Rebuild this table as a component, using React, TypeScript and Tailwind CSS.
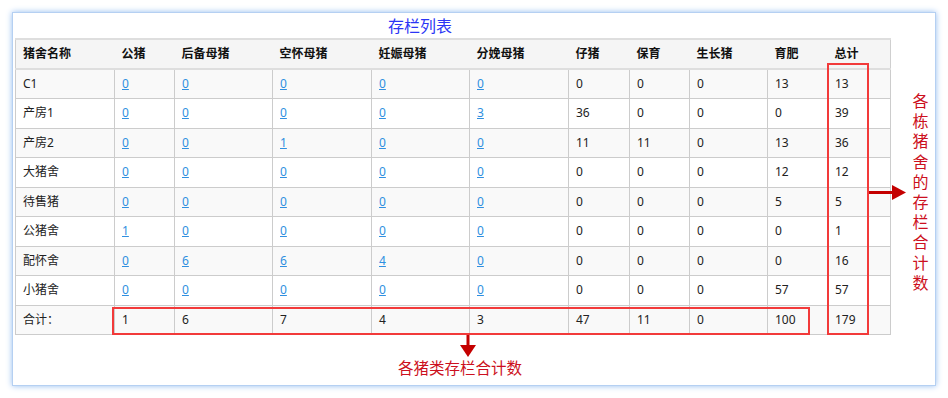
import React from "react";

const cols = [
  { title: "猪舍名称", w: "w-[99px]" },
  { title: "公猪", w: "w-[60px]" },
  { title: "后备母猪", w: "w-[98px]" },
  { title: "空怀母猪", w: "w-[99px]" },
  { title: "妊娠母猪", w: "w-[98px]" },
  { title: "分娩母猪", w: "w-[99px]" },
  { title: "仔猪", w: "w-[61px]" },
  { title: "保育", w: "w-[60px]" },
  { title: "生长猪", w: "w-[78px]" },
  { title: "育肥", w: "w-[60px]" },
  { title: "总计", w: "w-[63px]" },
];

// first five number columns are links
const rows: [string, number[]][] = [
  ["C1", [0, 0, 0, 0, 0, 0, 0, 0, 13, 13]],
  ["产房1", [0, 0, 0, 0, 3, 36, 0, 0, 0, 39]],
  ["产房2", [0, 0, 1, 0, 0, 11, 11, 0, 13, 36]],
  ["大猪舍", [0, 0, 0, 0, 0, 0, 0, 0, 12, 12]],
  ["待售猪", [0, 0, 0, 0, 0, 0, 0, 0, 5, 5]],
  ["公猪舍", [1, 0, 0, 0, 0, 0, 0, 0, 0, 1]],
  ["配怀舍", [0, 6, 6, 4, 0, 0, 0, 0, 0, 16]],
  ["小猪舍", [0, 0, 0, 0, 0, 0, 0, 0, 57, 57]],
];

const totals = [1, 6, 7, 4, 3, 47, 11, 0, 100, 179];

const font = { fontFamily: '"Noto Sans", "Noto Sans CJK SC", sans-serif' };

function StockTable() {
  return (
    <table className="table-fixed border-collapse text-[12px] text-[#222] shrink-0">
      <colgroup>
        {cols.map((c) => (
          <col key={c.title} className={c.w} />
        ))}
      </colgroup>
      <thead>
        <tr className="h-[30px] bg-[#f5f5f5]">
          {cols.map((c) => (
            <th
              key={c.title}
              className="border-t-2 border-b-2 border-[#dedede] first:border-l last:border-r first:border-l-[#cfcfcf] last:border-r-[#cfcfcf] px-[7px] text-left font-bold text-[#111]"
            >
              {c.title}
            </th>
          ))}
        </tr>
      </thead>
      <tbody>
        {rows.map(([name, vals], i) => (
          <tr key={name} className={`h-[29.5px] ${i % 2 === 0 ? "bg-[#f9f9f9]" : "bg-white"}`}>
            <td className="border border-[#cccccc] px-[7px]">{name}</td>
            {vals.map((v, j) => (
              <td key={j} className="border border-[#cccccc] px-[7px]">
                {j < 5 ? <a className="text-[#2f8fe0] underline">{v}</a> : v}
              </td>
            ))}
          </tr>
        ))}
        <tr className="h-[29.5px] bg-[#f9f9f9]">
          <td className="border border-[#cccccc] px-[7px]">合计：</td>
          {totals.map((v, j) => (
            <td key={j} className="border border-[#cccccc] px-[7px]">
              {v}
            </td>
          ))}
        </tr>
      </tbody>
    </table>
  );
}

export default function App() {
  return (
    <div className="relative w-[948px] h-[398px] bg-white p-[12px]" style={font}>
      <div className="w-[924px] h-[374px] border border-[#b5d0f2] shadow-[0_0_6px_#94bdf0] bg-white pl-[2px] flex flex-col">
        <div className="h-[25px] pl-[373px] pt-[3px] text-[16px] leading-[20px] text-[#2b35f5]">
          存栏列表
        </div>

        <div className="flex items-start">
          <StockTable />
          <div className="pl-[19px] pt-[53px] w-[40px] flex flex-col items-center text-[16px] leading-[20.2px] text-[#cc1020]">
            {"各栋猪舍的存栏合计数".split("").map((ch, i) => (
              <span key={i}>{ch}</span>
            ))}
          </div>
        </div>

        {/* column totals note */}
        <div className="pl-[383px] flex flex-col items-start">
          <svg className="ml-[62px]" width="16" height="22" viewBox="0 0 16 22">
            <rect x="6.5" y="0" width="3" height="12" fill="#c40000" />
            <polygon points="0,10 16,10 8,22" fill="#c40000" />
          </svg>
          <span className="text-[15.5px] leading-[22px] text-[#cc1020]">各猪类存栏合计数</span>
        </div>
      </div>

      {/* red highlight boxes laid over the table */}
      <div className="absolute left-[112px] top-[307px] w-[698px] h-[28px] border-2 border-[#f23a3a]" />
      <div className="absolute left-[827px] top-[63px] w-[42px] h-[272px] border-2 border-[#f23a3a]" />
      <svg className="absolute left-[869px] top-[185px]" width="37" height="15" viewBox="0 0 37 15">
        <rect x="0" y="6" width="25" height="3" fill="#c40000" />
        <polygon points="23,0 37,7.5 23,15" fill="#c40000" />
      </svg>
    </div>
  );
}
